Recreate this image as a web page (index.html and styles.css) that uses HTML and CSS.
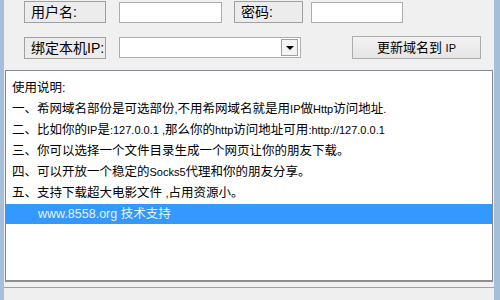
FILE: index.html
```html
<!DOCTYPE html>
<html lang="zh-CN">
<head>
    <meta charset="UTF-8">
    <title>希网域名</title>
    <link rel="stylesheet" href="styles.css">
</head>
<body>
    <div class="window">
        <!-- 账号 -->
        <div class="row row-top">
            <div class="label label-user">用户名:</div>
            <div class="field field-user"></div>
            <div class="label label-pass">密码:</div>
            <div class="field field-pass"></div>
        </div>

        <!-- 绑定IP -->
        <div class="row row-ip">
            <div class="label label-user">绑定本机IP:</div>
            <div class="combo">
                <div class="combo-btn"><span class="arrow"></span></div>
            </div>
            <div class="btn">更新域名到 <span class="en">IP</span></div>
        </div>

        <div class="memo">
            <div class="line">使用说明:</div>
            <div class="line">一、希网域名部份是可选部份<span class="en">,</span>不用希网域名就是用<span class="en">IP</span>做<span class="en">Http</span>访问地址<span class="en">.</span></div>
            <div class="line">二、比如你的<span class="en">IP</span>是<span class="en">:127.0.0.1 ,</span>那么你的<span class="en">http</span>访问地址可用<span class="en">:http://127.0.0.1</span></div>
            <div class="line">三、你可以选择一个文件目录生成一个网页让你的朋友下载。</div>
            <div class="line">四、可以开放一个稳定的<span class="en">Socks5</span>代理和你的朋友分享。</div>
            <div class="line">五、支持下载超大电影文件 <span class="en">,</span>占用资源小。</div>
            <div class="line selected">www.8558.org 技术支持</div>
        </div>

        <div class="status"></div>
    </div>
</body>
</html>
```

FILE: styles.css
```css
html, body {
    margin: 0;
    padding: 0;
}
body {
    width: 500px;
    height: 300px;
    overflow: hidden;
    background: #f0f0f0;
    font-family: "Liberation Sans", "Noto Sans CJK SC", sans-serif;
    color: #000;
}
.window {
    height: 300px;
    box-sizing: border-box;
    border-left: 4px solid #a6bfd9;
    border-right: 6px solid #a6bfd9;
    background: #f0f0f0;
    display: flex;
    flex-direction: column;
}
.row {
    display: flex;
    align-items: center;
    padding-left: 20px;
}
.row-top { margin-top: 1px; height: 22px; }
.row-ip { margin-top: 13px; height: 23px; }

.label {
    box-sizing: border-box;
    height: 22px;
    border: 1px solid #a0a0a0;
    background: #ececec;
    font-size: 14px;
    line-height: 20px;
    padding-left: 6px;
    white-space: nowrap;
}
.label-user { width: 82px; margin-right: 13px; }
.label-pass { width: 69px; margin-right: 8px; }

.field {
    box-sizing: border-box;
    height: 21px;
    border: 1px solid #abadb3;
    background: #fff;
}
.field-user { width: 103px; margin-right: 12px; }
.field-pass { width: 92px; }

.combo {
    box-sizing: border-box;
    width: 182px;
    height: 21px;
    border: 1px solid #abadb3;
    background: #fff;
    display: flex;
    justify-content: flex-end;
    align-items: center;
    padding-right: 2px;
}
.combo-btn {
    box-sizing: border-box;
    width: 17px;
    height: 17px;
    border: 1px solid #a0a0a0;
    background: #f4f4f4;
    display: flex;
    align-items: center;
    justify-content: center;
}
.arrow {
    width: 0;
    height: 0;
    border-left: 4px solid transparent;
    border-right: 4px solid transparent;
    border-top: 4px solid #000;
}
.btn {
    box-sizing: border-box;
    width: 129px;
    height: 23px;
    margin-left: 51px;
    border: 1px solid #acacac;
    background: linear-gradient(#f2f2f2, #e5e5e5);
    font-size: 13px;
    line-height: 21px;
    text-align: center;
}

.memo {
    box-sizing: border-box;
    margin: 11px 0 0 1px;
    width: 488px;
    height: 214px;
    border: 1px solid #828790;
    border-bottom: 2px solid #8e8e8e;
    background: #fff;
    padding-top: 7px;
    font-size: 12.5px;
}
.line {
    height: 21px;
    line-height: 21px;
    padding-left: 6px;
    white-space: nowrap;
}
.en { font-size: 11px; }
.selected {
    height: 20px;
    line-height: 20px;
    background: #3399ff;
    color: #e6f2ff;
    padding-left: 32px;
}
.status {
    margin-top: 5px;
    border-top: 1px solid #a0a0a0;
    height: 12px;
    background: #efefef;
}
```
